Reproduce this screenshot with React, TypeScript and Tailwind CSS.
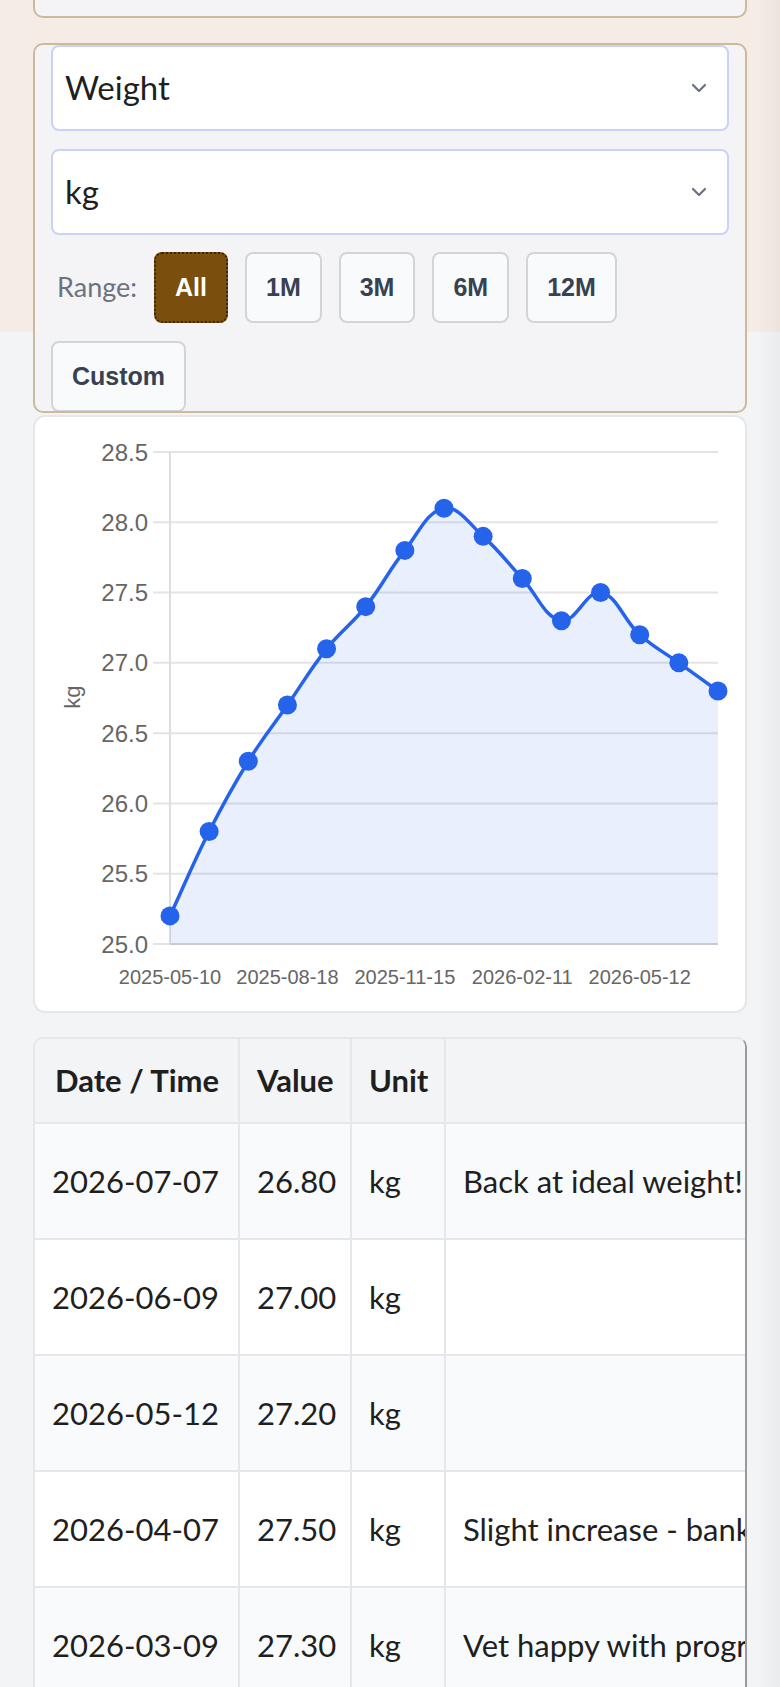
import React from "react";

type Pt = { x: number; y: number };

const values = [25.2, 25.8, 26.3, 26.7, 27.1, 27.4, 27.8, 28.1, 27.9, 27.6, 27.3, 27.5, 27.2, 27.0, 26.8];
const xLabels: [number, string][] = [
  [0, "2025-05-10"],
  [3, "2025-08-18"],
  [6, "2025-11-15"],
  [9, "2026-02-11"],
  [12, "2026-05-12"],
];
const yTicks = [28.5, 28.0, 27.5, 27.0, 26.5, 26.0, 25.5, 25.0];

// plot area, in the card's inner coordinates
const X0 = 135;
const X1 = 683;
const YB = 527;
const step = (X1 - X0) / (values.length - 1);
const yOf = (v: number) => YB - ((v - 25) / 3.5) * 492;

const pts: Pt[] = values.map((v, i) => ({ x: X0 + i * step, y: yOf(v) }));

// same spline as chart.js (tension 0.4)
const curvePath = (p: Pt[]) => {
  const t = 0.4;
  const cps = p.map((cur, i) => {
    const prev = p[i - 1] || cur;
    const next = p[i + 1] || cur;
    const d01 = Math.hypot(cur.x - prev.x, cur.y - prev.y);
    const d12 = Math.hypot(next.x - cur.x, next.y - cur.y);
    const s01 = d01 / (d01 + d12 || 1);
    const s12 = d12 / (d01 + d12 || 1);
    const fa = t * s01;
    const fb = t * s12;
    return {
      prev: { x: cur.x - fa * (next.x - prev.x), y: cur.y - fa * (next.y - prev.y) },
      next: { x: cur.x + fb * (next.x - prev.x), y: cur.y + fb * (next.y - prev.y) },
    };
  });
  let d = `M${p[0].x},${p[0].y}`;
  for (let i = 1; i < p.length; i++) {
    const a = cps[i - 1].next;
    const b = cps[i].prev;
    d += ` C${a.x},${a.y} ${b.x},${b.y} ${p[i].x},${p[i].y}`;
  }
  return d;
};

const line = curvePath(pts);
const area = `${line} L${X1},${YB} L${X0},${YB} Z`;

const rows = [
  { date: "2026-07-07", value: "26.80", unit: "kg", note: "Back at ideal weight!" },
  { date: "2026-06-09", value: "27.00", unit: "kg", note: "" },
  { date: "2026-05-12", value: "27.20", unit: "kg", note: "" },
  { date: "2026-04-07", value: "27.50", unit: "kg", note: "Slight increase - bank holiday treats" },
  { date: "2026-03-09", value: "27.30", unit: "kg", note: "Vet happy with progress" },
  { date: "2026-02-11", value: "27.60", unit: "kg", note: "" },
];

const Chevron = () => (
  <svg width="16" height="10" viewBox="0 0 16 10" className="shrink-0">
    <path d="M2 2 L8 8 L14 2" fill="none" stroke="#6b7280" strokeWidth="2.2" strokeLinecap="round" strokeLinejoin="round" />
  </svg>
);

const Select = ({ label }: { label: string }) => (
  <div className="h-[86px] flex items-center justify-between rounded-[8px] border-2 border-[#c9d3f7] bg-white pl-[12px] pr-[20px]">
    <span className="text-[33px] text-[#1f1f1f]">{label}</span>
    <Chevron />
  </div>
);

const RangeBtn = ({ label, active }: { label: string; active?: boolean }) => (
  <button
    className={`${
      active ? "bg-[#7a4f0e] text-white border-dotted border-[#3f2706]" : "bg-[#f9fafb] text-[#374151] border-[#d1d5db]"
    } h-[71px] px-[19px] rounded-[8px] border-2 text-[25px] font-bold font-['Liberation_Sans',Arial,sans-serif]`}
  >
    {label}
  </button>
);

const Chart = () => (
  <svg width="710" height="594" viewBox="0 0 710 594" className="block">
    {yTicks.map((v) => (
      <line key={v} x1={118} x2={X1} y1={yOf(v)} y2={yOf(v)} stroke="#e4e4e4" strokeWidth="2" />
    ))}
    <line x1={X0} x2={X0} y1={yOf(28.5)} y2={YB} stroke="#dedede" strokeWidth="2" />
    <path d={area} fill="rgba(37,99,235,0.1)" />
    <line x1={X0} x2={X1} y1={YB} y2={YB} stroke="#c9cbd2" strokeWidth="2" />
    {yTicks.map((v) => (
      <text
        key={v}
        x={113}
        y={yOf(v) + 8.5}
        textAnchor="end"
        fontSize="24"
        fill="#666"
        fontFamily="'Liberation Sans', Arial, sans-serif"
      >
        {v.toFixed(1)}
      </text>
    ))}
    {xLabels.map(([i, l]) => (
      <text
        key={l}
        x={X0 + i * step}
        y={567}
        textAnchor="middle"
        fontSize="20"
        fill="#666"
        fontFamily="'Liberation Sans', Arial, sans-serif"
      >
        {l}
      </text>
    ))}
    <text
      x={0}
      y={0}
      transform="translate(45 280) rotate(-90)"
      textAnchor="middle"
      fontSize="22"
      fill="#666"
      fontFamily="'Liberation Sans', Arial, sans-serif"
    >
      kg
    </text>
    <path d={line} fill="none" stroke="#2563eb" strokeWidth="3.5" />
    {pts.map((p, i) => (
      <circle key={i} cx={p.x} cy={p.y} r="9.5" fill="#2563eb" />
    ))}
  </svg>
);

export default function App() {
  return (
    <div className="relative w-[780px] h-[1687px] overflow-hidden font-['Lato','Noto_Sans',sans-serif] bg-[linear-gradient(to_right,transparent_756px,rgba(0,0,0,0.035)),linear-gradient(to_bottom,#f5ece6_332px,#f3f4f6_332px)]">
      <div className="px-[33px]">
        {/* tail of the card above */}
        <div className="h-[18px] border-2 border-t-0 border-[#cdb99b] rounded-b-[10px] bg-[#f4f4f6]" />

        {/* filters */}
        <div className="mt-[25px] h-[370px] overflow-hidden border-2 border-[#cdb99b] rounded-[10px] bg-[#f4f4f6] px-[16px]">
          <Select label="Weight" />
          <div className="mt-[18px]">
            <Select label="kg" />
          </div>
          <div className="mt-[17px] flex flex-wrap items-center gap-x-[17px] gap-y-[18px]">
            <span className="pl-[6px] text-[27px] text-[#6b7280]">Range:</span>
            <RangeBtn label="All" active />
            <RangeBtn label="1M" />
            <RangeBtn label="3M" />
            <RangeBtn label="6M" />
            <RangeBtn label="12M" />
            <RangeBtn label="Custom" />
          </div>
        </div>

        {/* chart */}
        <div className="mt-[2px] h-[598px] border-2 border-[#e5e7eb] rounded-[12px] bg-white overflow-hidden">
          <Chart />
        </div>

        {/* history table */}
        <div className="mt-[24px] overflow-hidden rounded-t-[10px] border-t-2 border-l-2 border-r-2 border-t-[#e5e7eb] border-l-[#e5e7eb] border-r-[#9a9a9a]">
          <table className="table-fixed border-collapse w-[900px] text-[31px] text-[#1f1f1f]">
            <colgroup>
              <col className="w-[204px]" />
              <col className="w-[112px]" />
              <col className="w-[94px]" />
              <col className="w-[490px]" />
            </colgroup>
            <thead>
              <tr className="h-[84px] bg-[#f3f4f6]">
                <th className="border-2 border-t-0 border-l-0 border-[#e5e7eb] pl-[20px] pr-[14px] text-left font-bold">Date / Time</th>
                <th className="border-2 border-t-0 border-[#e5e7eb] px-[17px] text-left font-bold">Value</th>
                <th className="border-2 border-t-0 border-[#e5e7eb] px-[17px] text-left font-bold">Unit</th>
                <th className="border-2 border-t-0 border-[#e5e7eb] px-[17px] text-left font-bold"></th>
              </tr>
            </thead>
            <tbody>
              {rows.map((r, i) => (
                <tr key={r.date} className={`h-[116px] ${i % 2 === 0 ? "bg-[#f9fafb]" : "bg-white"}`}>
                  <td className="border-2 border-l-0 border-[#e5e7eb] px-[17px] whitespace-nowrap">{r.date}</td>
                  <td className="border-2 border-[#e5e7eb] px-[17px] whitespace-nowrap">{r.value}</td>
                  <td className="border-2 border-[#e5e7eb] px-[17px] whitespace-nowrap">{r.unit}</td>
                  <td className="border-2 border-[#e5e7eb] px-[17px] whitespace-nowrap">{r.note}</td>
                </tr>
              ))}
            </tbody>
          </table>
        </div>
      </div>
    </div>
  );
}
